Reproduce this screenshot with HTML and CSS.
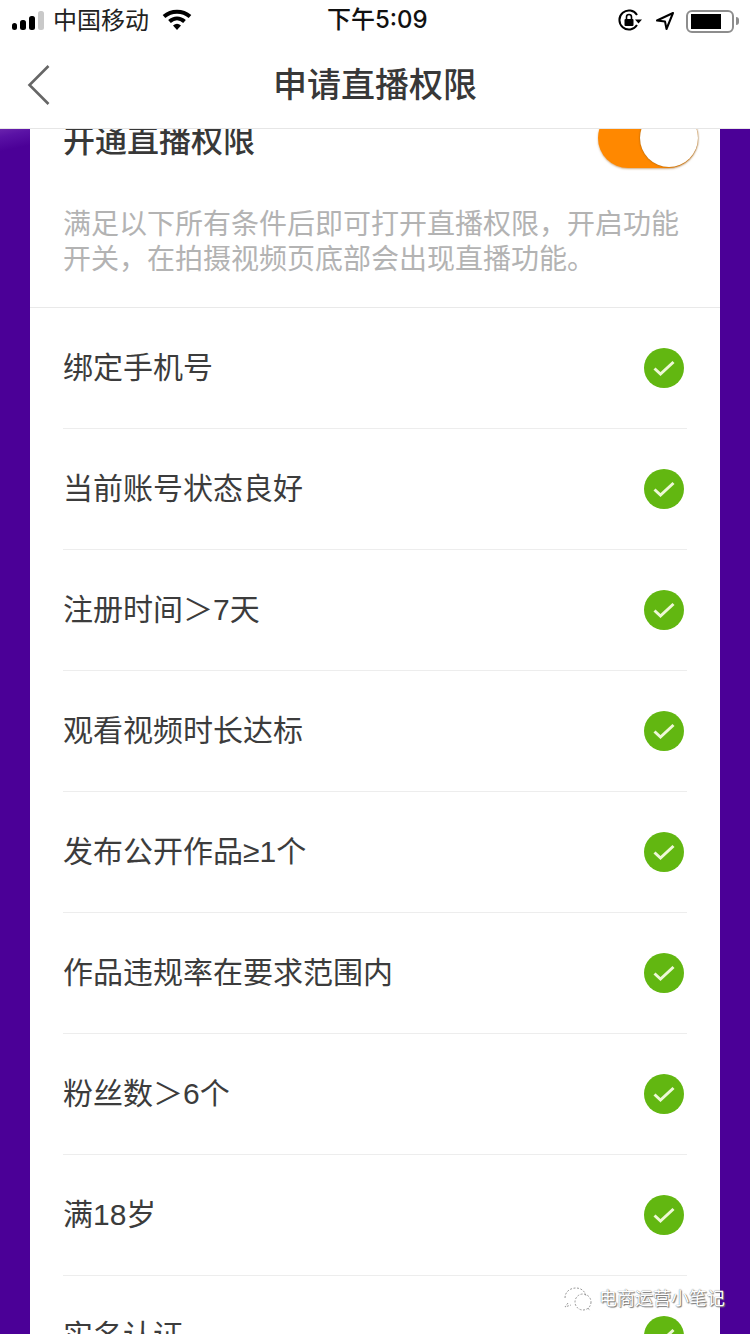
FILE: index.html
```html
<!DOCTYPE html>
<html lang="zh-CN">
<head>
<meta charset="utf-8">
<title>申请直播权限</title>
<link rel="stylesheet" href="styles.css">
</head>
<body>
<div class="phone">
  <header class="top">
    <div class="status">
      <div class="status-left">
        <svg class="signal" width="36" height="20" viewBox="0 0 36 20"><rect x="0" y="12" width="5" height="7" rx="2.500" fill="#000"/><rect x="8" y="9" width="6" height="10" rx="2.500" fill="#000"/><rect x="17" y="5" width="6" height="14" rx="2.500" fill="#000"/><rect x="26" y="0" width="6" height="19" rx="2.500" fill="#c9c9c9"/></svg>
        <span class="carrier">中国移动</span>
        <svg class="wifi" width="30" height="22" viewBox="0 0 30 22"><path d="M2 7.500C9.500 1 20.500 1 28 7.500" fill="none" stroke="#000" stroke-width="4"/><path d="M7.500 12.500C12 8.500 18 8.500 22.500 12.500" fill="none" stroke="#000" stroke-width="4"/><path d="M11 16.500Q15 13 19 16.500L15 21Z" fill="#000"/></svg>
      </div>
      <div class="time">下午5:09</div>
      <div class="status-right">
        <svg width="26" height="26" viewBox="0 0 26 26"><path d="M20 17A9.500 9.500 0 1 1 20 7" fill="none" stroke="#000" stroke-width="2"/><path d="M18 11.500h7l-3.500 4z" fill="#000"/><rect x="7.500" y="11" width="9" height="7" rx="1" fill="#000"/><path d="M9.500 11V9a2.500 2.500 0 0 1 5 0v2" fill="none" stroke="#000" stroke-width="1.600"/></svg>
        <svg class="loc" width="20" height="20" viewBox="0 0 20 20"><path d="M18 2L2 9.500l8 1 1.500 7.500z" fill="none" stroke="#000" stroke-width="2" stroke-linejoin="round"/></svg>
        <div class="battery"><div class="battery-level"></div></div>
        <div class="battery-tip"></div>
      </div>
    </div>
    <nav class="nav">
      <svg class="back" width="24" height="42" viewBox="0 0 24 42"><path d="M21.500 2L2.500 21l19 19" fill="none" stroke="#666" stroke-width="2.600"/></svg>
      <h1 class="title">申请直播权限</h1>
    </nav>
  </header>
  <main class="main">
    <section class="card">
      <div class="head">
        <h2 class="head-title">开通直播权限</h2>
        <div class="toggle"><div class="knob"></div></div>
      </div>
      <p class="desc">满足以下所有条件后即可打开直播权限，开启功能开关，在拍摄视频页底部会出现直播功能。</p>
      <ul class="list">
        <li class="row"><span>绑定手机号</span><svg class="check" viewBox="0 0 40 40"><circle cx="20" cy="20" r="20" fill="#62b711"/><path d="M10.500 20.500l6 5.500 13-12" fill="none" stroke="#eef8d6" stroke-width="3"/></svg></li>
        <li class="row"><span>当前账号状态良好</span><svg class="check" viewBox="0 0 40 40"><circle cx="20" cy="20" r="20" fill="#62b711"/><path d="M10.500 20.500l6 5.500 13-12" fill="none" stroke="#eef8d6" stroke-width="3"/></svg></li>
        <li class="row"><span>注册时间＞7天</span><svg class="check" viewBox="0 0 40 40"><circle cx="20" cy="20" r="20" fill="#62b711"/><path d="M10.500 20.500l6 5.500 13-12" fill="none" stroke="#eef8d6" stroke-width="3"/></svg></li>
        <li class="row"><span>观看视频时长达标</span><svg class="check" viewBox="0 0 40 40"><circle cx="20" cy="20" r="20" fill="#62b711"/><path d="M10.500 20.500l6 5.500 13-12" fill="none" stroke="#eef8d6" stroke-width="3"/></svg></li>
        <li class="row"><span>发布公开作品≥1个</span><svg class="check" viewBox="0 0 40 40"><circle cx="20" cy="20" r="20" fill="#62b711"/><path d="M10.500 20.500l6 5.500 13-12" fill="none" stroke="#eef8d6" stroke-width="3"/></svg></li>
        <li class="row"><span>作品违规率在要求范围内</span><svg class="check" viewBox="0 0 40 40"><circle cx="20" cy="20" r="20" fill="#62b711"/><path d="M10.500 20.500l6 5.500 13-12" fill="none" stroke="#eef8d6" stroke-width="3"/></svg></li>
        <li class="row"><span>粉丝数＞6个</span><svg class="check" viewBox="0 0 40 40"><circle cx="20" cy="20" r="20" fill="#62b711"/><path d="M10.500 20.500l6 5.500 13-12" fill="none" stroke="#eef8d6" stroke-width="3"/></svg></li>
        <li class="row"><span>满18岁</span><svg class="check" viewBox="0 0 40 40"><circle cx="20" cy="20" r="20" fill="#62b711"/><path d="M10.500 20.500l6 5.500 13-12" fill="none" stroke="#eef8d6" stroke-width="3"/></svg></li>
        <li class="row"><span>实名认证</span><svg class="check" viewBox="0 0 40 40"><circle cx="20" cy="20" r="20" fill="#62b711"/><path d="M10.500 20.500l6 5.500 13-12" fill="none" stroke="#eef8d6" stroke-width="3"/></svg></li>
      </ul>
    </section>
    <div class="mark">
      <svg width="32" height="26" viewBox="0 0 32 26"><g fill="none" stroke="#999" stroke-width="1" stroke-dasharray="2 1.500"><path d="M2 12C2 5 8 2 13 2s9 3 10 8"/><path d="M5 17l-3 4 6-2"/><circle cx="20" cy="16" r="8"/><path d="M25 22l2 3"/></g></svg>
      <span>电商运营小笔记</span>
    </div>
  </main>
</div>
</body>
</html>
```
FILE: styles.css
```css
* { box-sizing: border-box; }
html, body { margin: 0; padding: 0; }
body {
  width: 750px;
  height: 1334px;
  overflow: hidden;
  background: #fff;
  font-family: "Liberation Sans", "Noto Sans CJK SC", sans-serif;
}
.phone { width: 750px; height: 1334px; display: flex; flex-direction: column; overflow: hidden; }
.top { height: 129px; flex: none; background: #fff; border-bottom: 1px solid #e6e6e6; position: relative; z-index: 1; }
.status { height: 42px; display: flex; align-items: center; justify-content: space-between; position: relative; }
.status-left { display: flex; align-items: center; padding-left: 12px; }
.signal { margin-right: 5px; }
.carrier { font-size: 24px; line-height: 40px; color: #222; width: 96px; white-space: nowrap; }
.wifi { margin-left: 13px; margin-top: -3px; }
.time { position: absolute; left: 327px; top: 0; font-family: Inter, "Noto Sans CJK SC", sans-serif; font-size: 24px; font-weight: 500; line-height: 40px; color: #111; white-space: nowrap; }
.status-right { display: flex; align-items: center; padding-right: 11px; }
.loc { margin-left: 12px; margin-right: 11px; }
.battery { width: 48px; height: 23px; border: 2px solid #8d8d8d; border-radius: 6px; padding: 2px 3px; }
.battery-level { width: 30px; height: 15px; background: #000; }
.battery-tip { width: 3px; height: 8px; margin-left: 2px; background: #8d8d8d; border-radius: 0 3px 3px 0; }
.nav { height: 86px; display: flex; align-items: center; justify-content: center; position: relative; }
.back { position: absolute; left: 27px; top: 22px; }
.title { margin: 0; font-size: 34px; font-weight: 500; color: #383838; line-height: 80px; }
.main {
  flex: 1;
  min-height: 0;
  position: relative;
  overflow: hidden;
  padding: 0 30px;
  background: linear-gradient(168deg, #6a23ad 0, #5a12a5 8px, #4b0097 22px, #4b0097 100%) no-repeat 0 0 / 30px 30px, #4b0097;
}
.card { margin-top: -21px; background: #fff; height: 1400px; }
.head { height: 60px; display: flex; align-items: center; justify-content: space-between; padding: 0 22px 0 33px; }
.head-title { margin: 0; padding-top: 6px; font-size: 32px; font-weight: 500; color: #383838; line-height: 60px; }
.toggle { width: 100px; height: 60px; border-radius: 30px; background: #ff8800; box-shadow: 0 1px 2px rgba(160, 90, 10, .5); display: flex; justify-content: flex-end; }
.knob { width: 58px; height: 58px; margin-top: 1px; border-radius: 50%; background: #fff; box-shadow: 0 0 2px rgba(130, 80, 10, .9); }
.desc { margin: 0; padding: 39px 33px 0; height: 140px; font-size: 28px; line-height: 35px; color: #b3b3b3; border-bottom: 1px solid #e9e9e9; }
.list { list-style: none; margin: 0; padding: 0 33px; }
.row { height: 121px; display: flex; align-items: center; justify-content: space-between; padding: 0 3px 0 0; border-bottom: 1px solid #ededed; font-size: 30px; color: #3c3c3c; }
.row span { padding-bottom: 7px; }
.check { width: 40px; height: 40px; flex: none; }
.mark { position: absolute; left: 563px; top: 1157px; display: flex; align-items: center; gap: 4px; color: #fff; font-size: 18px; line-height: 26px; white-space: nowrap; text-shadow: 0 0 1px #555, 1px 1px 1px #777; }
```
